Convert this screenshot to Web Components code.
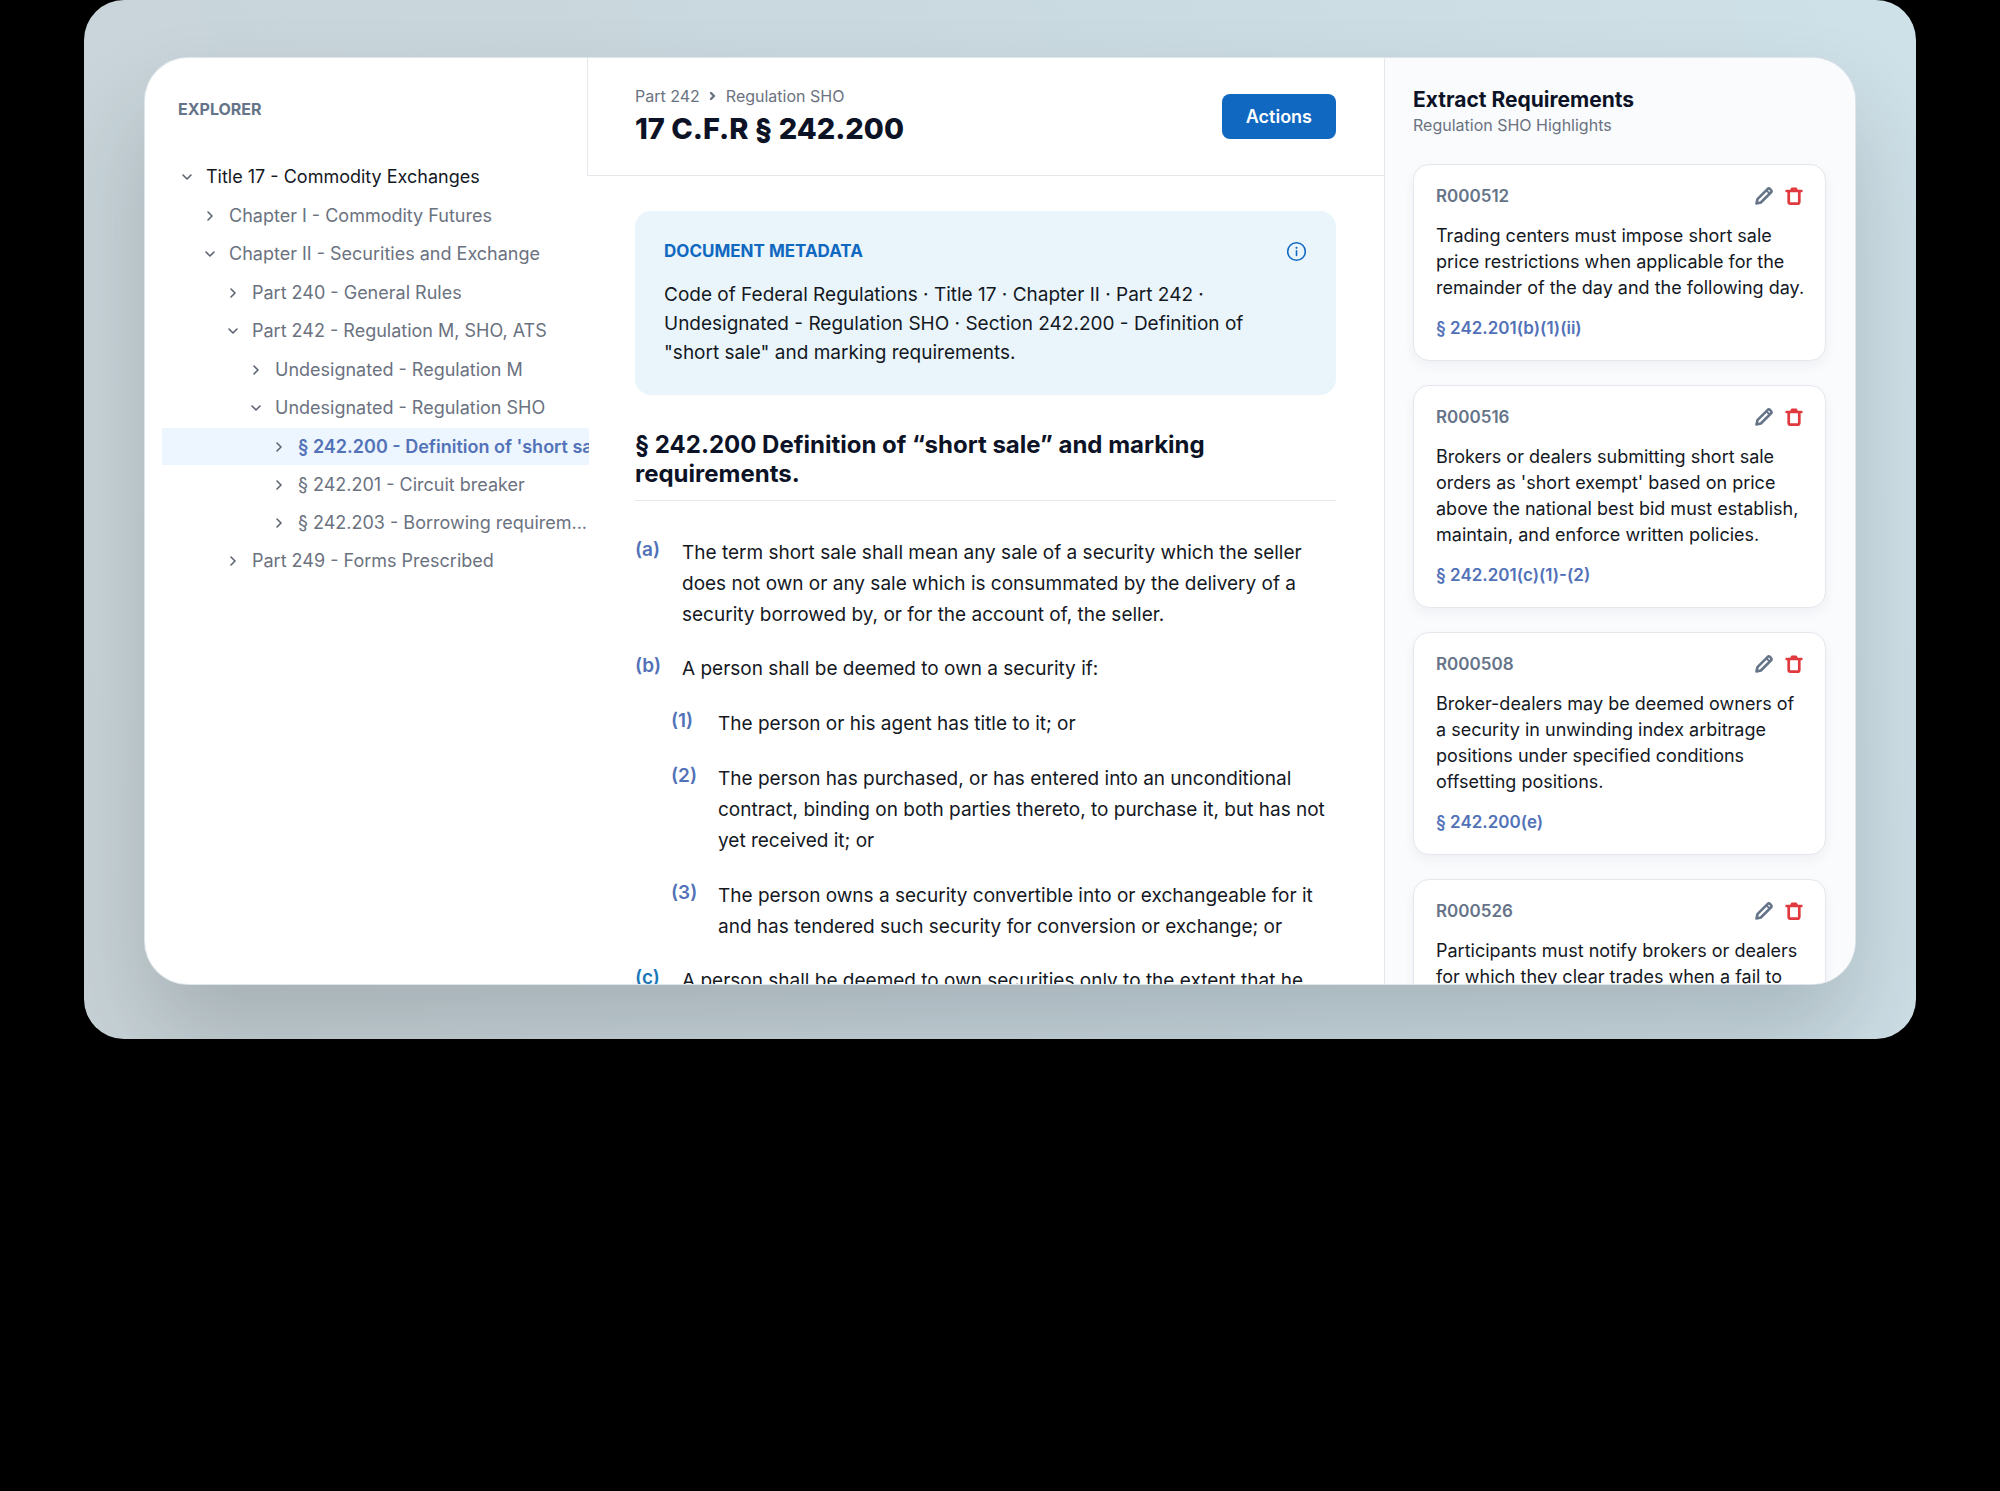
<!DOCTYPE html>
<html lang="en">
<head>
<meta charset="utf-8">
<title>17 C.F.R § 242.200</title>
<style>
  body {
    margin: 0;
    background: #000;
    color: #14181f;
    font-family: Inter, "Liberation Sans", sans-serif;
    --ink: #0d1326;
    --muted: #6b7280;
    --slate: #667489;
    --blue: #1068c0;
    --link: #5272b8;
    --line: #e4e7ec;
  }
</style>
</head>
<body>
<reg-stage>
  <explorer-panel slot="explorer" heading="EXPLORER">
    <tree-item label="Title 17 - Commodity Exchanges" open root>
      <tree-item label="Chapter I - Commodity Futures"></tree-item>
      <tree-item label="Chapter II - Securities and Exchange" open>
        <tree-item label="Part 240 - General Rules"></tree-item>
        <tree-item label="Part 242 - Regulation M, SHO, ATS" open>
          <tree-item label="Undesignated - Regulation M"></tree-item>
          <tree-item label="Undesignated - Regulation SHO" open>
            <tree-item label="§ 242.200 - Definition of 'short sale'" selected></tree-item>
            <tree-item label="§ 242.201 - Circuit breaker"></tree-item>
            <tree-item label="§ 242.203 - Borrowing requirem..."></tree-item>
          </tree-item>
        </tree-item>
        <tree-item label="Part 249 - Forms Prescribed"></tree-item>
      </tree-item>
    </tree-item>
  </explorer-panel>

  <doc-header slot="header" parent="Part 242" section="Regulation SHO">17 C.F.R § 242.200</doc-header>

  <doc-body slot="document">
    <meta-card slot="meta" heading="DOCUMENT METADATA">Code of Federal Regulations · Title 17 · Chapter II · Part 242 · Undesignated - Regulation SHO · Section 242.200 - Definition of "short sale" and marking requirements.</meta-card>
    <span slot="title">§ 242.200 Definition of “short sale” and marking requirements.</span>
    <clause-item mark="(a)">The term short sale shall mean any sale of a security which the seller does not own or any sale which is consummated by the delivery of a security borrowed by, or for the account of, the seller.</clause-item>
    <clause-item mark="(b)">A person shall be deemed to own a security if:
      <clause-item slot="sub" mark="(1)">The person or his agent has title to it; or</clause-item>
      <clause-item slot="sub" mark="(2)">The person has purchased, or has entered into an unconditional contract, binding on both parties thereto, to purchase it, but has not yet received it; or</clause-item>
      <clause-item slot="sub" mark="(3)">The person owns a security convertible into or exchangeable for it and has tendered such security for conversion or exchange; or</clause-item>
    </clause-item>
    <clause-item mark="(c)" active>A person shall be deemed to own securities only to the extent that he</clause-item>
  </doc-body>

  <requirements-panel slot="requirements" heading="Extract Requirements" subheading="Regulation SHO Highlights">
    <requirement-card code="R000512" cite="§ 242.201(b)(1)(ii)">Trading centers must impose short sale price restrictions when applicable for the remainder of the day and the following day.</requirement-card>
    <requirement-card code="R000516" cite="§ 242.201(c)(1)-(2)">Brokers or dealers submitting short sale orders as 'short exempt' based on price above the national best bid must establish, maintain, and enforce written policies.</requirement-card>
    <requirement-card code="R000508" cite="§ 242.200(e)">Broker-dealers may be deemed owners of a security in unwinding index arbitrage positions under specified conditions offsetting positions.</requirement-card>
    <requirement-card code="R000526">Participants must notify brokers or dealers for which they clear trades when a fail to</requirement-card>
  </requirements-panel>
</reg-stage>

<script>
const ICONS = {
  down: '<path d="M4 6l4 4 4-4" stroke-width="1.6"/>',
  right: '<path d="M6 4l4 4-4 4" stroke-width="1.6"/>',
  crumb: '<path d="M6 5l3 3-3 3" stroke-width="2.4"/>',
  info: '<circle cx="8" cy="8" r="6.7" stroke-width="1.2"/><path d="M8 7.4v3.7" stroke-width="1.2"/><circle cx="8" cy="5.2" r=".8" fill="currentColor" stroke="none"/>',
  pencil: '<path d="M1.3 14.7l.9-3.9 8.9-8.9a1.7 1.7 0 0 1 2.4 0l.6.6a1.7 1.7 0 0 1 0 2.4l-8.9 8.9z" stroke-width="2.3"/><path d="M10.4 3.2l2.4 2.4" stroke-width="1.8"/>',
  trash: '<path d="M1.4 3.6h13.2" stroke-width="2.2"/><path d="M5.6 2.8l.6-1.4h3.6l.6 1.4z" fill="currentColor" stroke-width="2"/><path d="M3.3 4.4v9a1.4 1.4 0 0 0 1.4 1.4h6.6a1.4 1.4 0 0 0 1.4-1.4v-9" stroke-width="2.4"/>'
};

class RegIcon extends HTMLElement {
  constructor() {
    super();
    this.attachShadow({ mode: "open" });
  }

  connectedCallback() {
    this.shadowRoot.innerHTML = `
      <style>
        :host { display: inline-flex; width: 16px; height: 16px; flex: none; }
        svg { width: 100%; height: 100%; overflow: visible; }
      </style>
      <svg viewBox="0 0 16 16" fill="none" stroke="currentColor" stroke-linecap="round" stroke-linejoin="round" aria-hidden="true">${ICONS[this.getAttribute("name")]}</svg>
    `;
  }
}

class RegStage extends HTMLElement {
  constructor() {
    super();
    this.attachShadow({ mode: "open" });
    this.shadowRoot.innerHTML = `
      <style>
        :host {
          display: block;
          margin: 0 84px;
          padding: 58px 61px 55px;
          border-radius: 40px;
          overflow: hidden;
          background: linear-gradient(75deg, #c8d3d7 0%, #cad9e0 50%, #cfe1e8 100%);
        }
        .window {
          display: grid;
          grid-template-columns: 442px minmax(0, 1fr) 471px;
          height: calc(70vh - 118px);
          border-radius: 43px;
          overflow: hidden;
          background: #fff;
          box-shadow: 0 0 0 1px #dfe6eb, 0 54px 96px rgba(30, 35, 40, 0.2);
        }
        main {
          display: flex;
          flex-direction: column;
          min-width: 0;
          min-height: 0;
        }
      </style>
      <div class="window">
        <slot name="explorer"></slot>
        <main>
          <slot name="header"></slot>
          <slot name="document"></slot>
        </main>
        <slot name="requirements"></slot>
      </div>
    `;
  }
}

class ExplorerPanel extends HTMLElement {
  constructor() {
    super();
    this.attachShadow({ mode: "open" });
  }

  connectedCallback() {
    this.shadowRoot.innerHTML = `
      <style>
        :host { display: block; min-width: 0; padding: 41px 0 0 17px; }
        h2 {
          margin: 0 0 39px 16px;
          font-size: 16px;
          line-height: 20px;
          font-weight: 700;
          color: var(--slate);
        }
        nav { margin-right: -2px; }
      </style>
      <h2>${this.getAttribute("heading")}</h2>
      <nav><slot></slot></nav>
    `;
  }
}

class TreeItem extends HTMLElement {
  constructor() {
    super();
    this.attachShadow({ mode: "open" });
  }

  get depth() {
    let depth = 0;
    let node = this.parentElement;
    while (node && node.localName === "tree-item") {
      depth++;
      node = node.parentElement;
    }
    return depth;
  }

  connectedCallback() {
    const open = this.hasAttribute("open");
    this.shadowRoot.innerHTML = `
      <style>
        :host { display: block; }
        button {
          display: flex;
          align-items: center;
          gap: 11px;
          box-sizing: border-box;
          width: 100%;
          height: 37px;
          margin: 0 0 1px;
          padding: 0 0 0 ${17 + this.depth * 23}px;
          border: 0;
          background: none;
          font: inherit;
          font-size: 18px;
          color: var(--muted);
          white-space: nowrap;
          cursor: pointer;
        }
        reg-icon { color: #5b6370; }
        :host([root]) button { color: #14181f; }
        :host([selected]) button {
          overflow: hidden;
          background: #edf5fe;
          color: var(--link);
          font-weight: 600;
        }
        .group { padding-top: 1px; }
      </style>
      <button type="button" aria-expanded="${open}">
        <reg-icon name="${open ? "down" : "right"}"></reg-icon>
        <span>${this.getAttribute("label")}</span>
      </button>
      ${open ? '<div class="group"><slot></slot></div>' : ""}
    `;
  }
}

class DocHeader extends HTMLElement {
  constructor() {
    super();
    this.attachShadow({ mode: "open" });
  }

  connectedCallback() {
    this.shadowRoot.innerHTML = `
      <style>
        :host {
          display: flex;
          justify-content: space-between;
          align-items: flex-start;
          padding: 28px 48px 27px 47px;
          border-left: 1px solid var(--line);
          border-bottom: 1px solid var(--line);
        }
        .crumbs {
          display: flex;
          align-items: center;
          gap: 5px;
          font-size: 16px;
          line-height: 20px;
          color: var(--muted);
        }
        .crumbs a { color: inherit; text-decoration: none; }
        h1 {
          margin: 4px 0 0;
          font-size: 29px;
          line-height: 38px;
          font-weight: 800;
          color: var(--ink);
        }
        button {
          height: 45px;
          margin-top: 8px;
          padding: 0 24px;
          border: 0;
          border-radius: 8px;
          background: var(--blue);
          color: #fff;
          font: inherit;
          font-size: 18px;
          font-weight: 600;
          cursor: pointer;
        }
      </style>
      <div>
        <div class="crumbs"><a href="#part">${this.getAttribute("parent")}</a><reg-icon name="crumb"></reg-icon><span>${this.getAttribute("section")}</span></div>
        <h1><slot></slot></h1>
      </div>
      <button type="button">Actions</button>
    `;
  }
}

class DocBody extends HTMLElement {
  constructor() {
    super();
    this.attachShadow({ mode: "open" });
    this.shadowRoot.innerHTML = `
      <style>
        :host {
          display: block;
          flex: 1;
          min-height: 0;
          overflow-y: auto;
          scrollbar-width: none;
          padding: 35px 48px 0;
        }
        h2 {
          margin: 35px 0 36px;
          padding-bottom: 12px;
          border-bottom: 1px solid var(--line);
          font-size: 24px;
          line-height: 29px;
          font-weight: 650;
          color: var(--ink);
        }
        .clauses { display: flex; flex-direction: column; gap: 23px; }
      </style>
      <slot name="meta"></slot>
      <h2><slot name="title"></slot></h2>
      <div class="clauses"><slot></slot></div>
    `;
  }
}

class MetaCard extends HTMLElement {
  constructor() {
    super();
    this.attachShadow({ mode: "open" });
  }

  connectedCallback() {
    this.shadowRoot.innerHTML = `
      <style>
        :host {
          display: block;
          padding: 28px 29px;
          border-radius: 16px;
          background: #e9f5fb;
        }
        header {
          display: flex;
          justify-content: space-between;
          align-items: center;
          color: var(--blue);
        }
        h3 { margin: 0; font-size: 17px; line-height: 24px; font-weight: 700; }
        button { display: flex; padding: 0; border: 0; background: none; color: inherit; }
        reg-icon { width: 21px; height: 21px; }
        p { margin: 17px 24px 0 0; font-size: 19px; line-height: 29px; }
      </style>
      <header>
        <h3>${this.getAttribute("heading")}</h3>
        <button type="button" aria-label="About this document"><reg-icon name="info"></reg-icon></button>
      </header>
      <p><slot></slot></p>
    `;
  }
}

class ClauseItem extends HTMLElement {
  constructor() {
    super();
    this.attachShadow({ mode: "open" });
  }

  connectedCallback() {
    this.shadowRoot.innerHTML = `
      <style>
        :host { display: block; font-size: 19px; line-height: 31px; }
        .row { display: grid; grid-template-columns: 47px minmax(0, 1fr); }
        .mark {
          line-height: 25px;
          font-weight: 600;
          color: var(--link);
        }
        :host([active]) .mark { color: #1b78b8; }
        .sub { display: flex; flex-direction: column; gap: 24px; padding-left: 36px; }
        ::slotted([slot="sub"]:first-of-type) { margin-top: 24px; }
      </style>
      <div class="row"><span class="mark">${this.getAttribute("mark")}</span><div><slot></slot></div></div>
      <div class="sub"><slot name="sub"></slot></div>
    `;
  }
}

class RequirementsPanel extends HTMLElement {
  constructor() {
    super();
    this.attachShadow({ mode: "open" });
  }

  connectedCallback() {
    this.shadowRoot.innerHTML = `
      <style>
        :host {
          display: block;
          min-width: 0;
          overflow-y: auto;
          scrollbar-width: none;
          padding: 28px 29px 0 28px;
          border-left: 1px solid var(--line);
          background: #f9fbfd;
        }
        h2 { margin: 0; font-size: 21px; line-height: 28px; font-weight: 700; color: var(--ink); }
        p { margin: 0; font-size: 16px; line-height: 22px; color: var(--muted); }
        .list { display: flex; flex-direction: column; gap: 24px; margin-top: 28px; }
      </style>
      <h2>${this.getAttribute("heading")}</h2>
      <p>${this.getAttribute("subheading")}</p>
      <div class="list"><slot></slot></div>
    `;
  }
}

class RequirementCard extends HTMLElement {
  constructor() {
    super();
    this.attachShadow({ mode: "open" });
  }

  connectedCallback() {
    const cite = this.getAttribute("cite");
    this.shadowRoot.innerHTML = `
      <style>
        :host {
          display: block;
          padding: 21px 22px 22px;
          border: 1px solid var(--line);
          border-radius: 16px;
          background: #fff;
          box-shadow: 0 5px 12px rgba(30, 41, 59, 0.05);
        }
        header { display: flex; align-items: center; gap: 12px; height: 20px; }
        h3 { flex: 1; margin: 0; font-size: 17px; font-weight: 600; color: var(--slate); }
        button { display: flex; padding: 0; border: 0; background: none; color: var(--slate); cursor: pointer; }
        button.delete { color: #e0393e; }
        reg-icon { width: 18px; height: 18px; }
        p { margin: 17px -4px 17px 0; font-size: 18px; line-height: 26px; }
        a {
          display: block;
          font-size: 17px;
          line-height: 20px;
          font-weight: 600;
          color: var(--link);
          text-decoration: none;
        }
      </style>
      <header>
        <h3>${this.getAttribute("code")}</h3>
        <button type="button" aria-label="Edit"><reg-icon name="pencil"></reg-icon></button>
        <button type="button" class="delete" aria-label="Delete"><reg-icon name="trash"></reg-icon></button>
      </header>
      <p><slot></slot></p>
      ${cite ? `<a href="#cite">${cite}</a>` : ""}
    `;
  }
}

customElements.define("reg-icon", RegIcon);
customElements.define("reg-stage", RegStage);
customElements.define("explorer-panel", ExplorerPanel);
customElements.define("tree-item", TreeItem);
customElements.define("doc-header", DocHeader);
customElements.define("doc-body", DocBody);
customElements.define("meta-card", MetaCard);
customElements.define("clause-item", ClauseItem);
customElements.define("requirements-panel", RequirementsPanel);
customElements.define("requirement-card", RequirementCard);
</script>
</body>
</html>
